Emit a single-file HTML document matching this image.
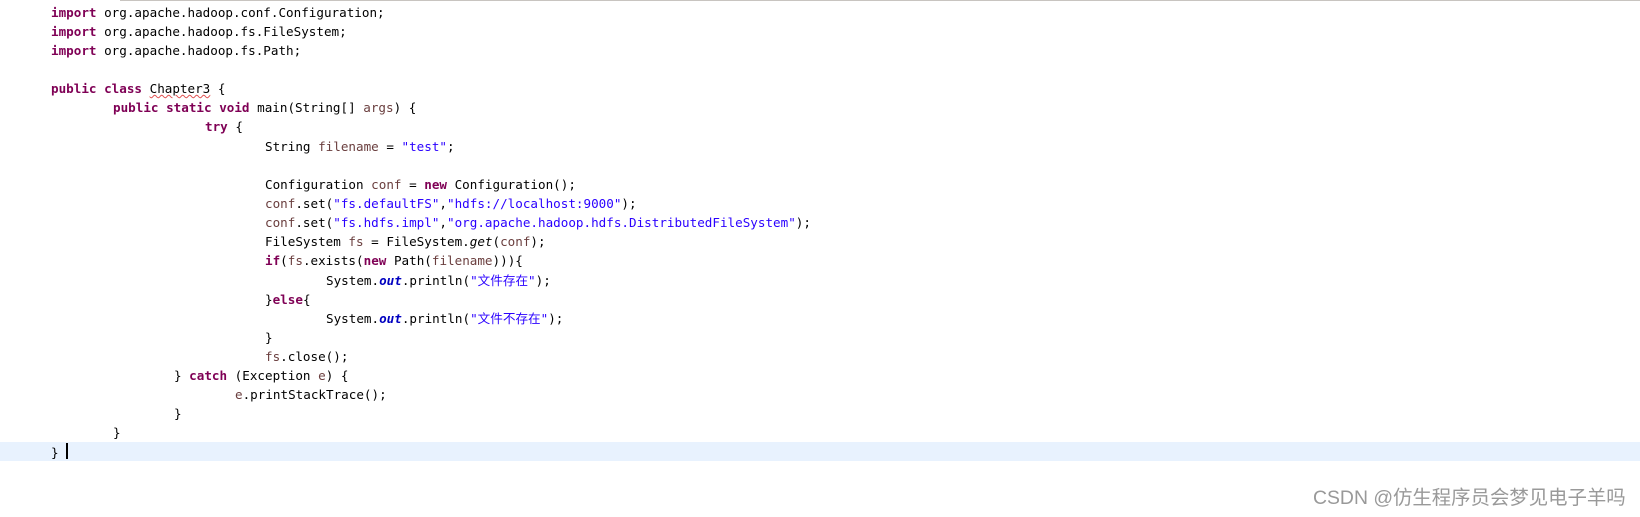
<!DOCTYPE html>
<html><head><meta charset="utf-8"><style>
body{margin:0;width:1640px;height:517px;background:#fff;position:relative;overflow:hidden}
.top{position:absolute;left:120px;top:0;width:1520px;height:1px;background:#c8c4c0}
.hl{position:absolute;left:0;top:442px;width:1640px;height:19px;background:#e8f2fe}
.l{position:absolute;white-space:pre;font-family:"DejaVu Sans Mono","Liberation Mono",monospace;font-size:12.6px;line-height:19px;color:#000}
.k{color:#7f0055;font-weight:bold}
.s{color:#2a00ff}
.v{color:#6a3e3e}
.f{color:#0000c0;font-weight:bold;font-style:italic}
.i{font-style:italic}
.sq{text-decoration:underline wavy #e05050;text-decoration-thickness:1px}
.cur{position:absolute;left:66px;top:443px;width:2px;height:16px;background:#000}
.wm{position:absolute;left:1313px;top:486px;font-family:"Liberation Sans","Noto Sans CJK SC",sans-serif;font-size:19.4px;line-height:24px;color:#999;white-space:nowrap}
</style></head><body>
<div class="top"></div>
<div class="hl"></div>
<div class="l" style="left:51px;top:3px"><span class="k">import</span> org.apache.hadoop.conf.Configuration;</div>
<div class="l" style="left:51px;top:22px"><span class="k">import</span> org.apache.hadoop.fs.FileSystem;</div>
<div class="l" style="left:51px;top:41px"><span class="k">import</span> org.apache.hadoop.fs.Path;</div>
<div class="l" style="left:51px;top:79px"><span class="k">public</span> <span class="k">class</span> <span class="sq">Chapter3</span> {</div>
<div class="l" style="left:113px;top:98px"><span class="k">public</span> <span class="k">static</span> <span class="k">void</span> main(String[] <span class="v">args</span>) {</div>
<div class="l" style="left:205px;top:117px"><span class="k">try</span> {</div>
<div class="l" style="left:265px;top:137px">String <span class="v">filename</span> = <span class="s">"test"</span>;</div>
<div class="l" style="left:265px;top:175px">Configuration <span class="v">conf</span> = <span class="k">new</span> Configuration();</div>
<div class="l" style="left:265px;top:194px"><span class="v">conf</span>.set(<span class="s">"fs.defaultFS"</span>,<span class="s">"hdfs://localhost:9000"</span>);</div>
<div class="l" style="left:265px;top:213px"><span class="v">conf</span>.set(<span class="s">"fs.hdfs.impl"</span>,<span class="s">"org.apache.hadoop.hdfs.DistributedFileSystem"</span>);</div>
<div class="l" style="left:265px;top:232px">FileSystem <span class="v">fs</span> = FileSystem.<span class="i">get</span>(<span class="v">conf</span>);</div>
<div class="l" style="left:265px;top:251px"><span class="k">if</span>(<span class="v">fs</span>.exists(<span class="k">new</span> Path(<span class="v">filename</span>))){</div>
<div class="l" style="left:326px;top:271px">System.<span class="f">out</span>.println(<span class="s">"文件存在"</span>);</div>
<div class="l" style="left:265px;top:290px">}<span class="k">else</span>{</div>
<div class="l" style="left:326px;top:309px">System.<span class="f">out</span>.println(<span class="s">"文件不存在"</span>);</div>
<div class="l" style="left:265px;top:328px">}</div>
<div class="l" style="left:265px;top:347px"><span class="v">fs</span>.close();</div>
<div class="l" style="left:174px;top:366px">} <span class="k">catch</span> (Exception <span class="v">e</span>) {</div>
<div class="l" style="left:235px;top:385px"><span class="v">e</span>.printStackTrace();</div>
<div class="l" style="left:174px;top:404px">}</div>
<div class="l" style="left:113px;top:423px">}</div>
<div class="l" style="left:51px;top:443px">}</div>
<div class="cur"></div>
<div class="wm">CSDN @仿生程序员会梦见电子羊吗</div>
</body></html>
